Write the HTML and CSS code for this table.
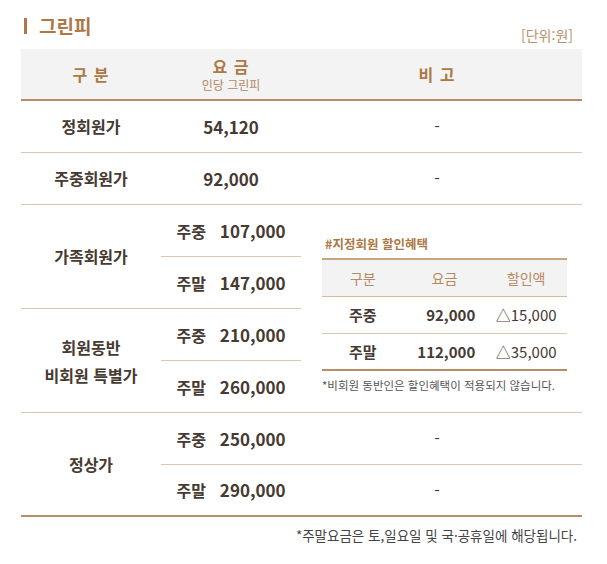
FILE: index.html
```html
<!DOCTYPE html>
<html lang="ko">
<head>
<meta charset="utf-8">
<title>그린피</title>
<link rel="stylesheet" href="styles.css">
</head>
<body>
<div class="page">
  <div class="head">
    <h2 class="title"><span class="bar"></span>그린피</h2>
    <span class="unit">[단위:원]</span>
  </div>
  <table class="fee">
    <colgroup>
      <col class="c1"><col class="c2"><col class="c3">
    </colgroup>
    <thead>
      <tr>
        <th>구 분</th>
        <th><span class="th-main">요 금</span><span class="th-sub">인당 그린피</span></th>
        <th class="th-note">비 고</th>
      </tr>
    </thead>
    <tbody>
      <tr>
        <td class="label">정회원가</td>
        <td class="price"><span class="num">54,120</span></td>
        <td class="note">-</td>
      </tr>
      <tr>
        <td class="label">주중회원가</td>
        <td class="price"><span class="num">92,000</span></td>
        <td class="note">-</td>
      </tr>
      <tr>
        <td class="label" rowspan="2">가족회원가</td>
        <td class="price"><span class="day">주중</span><span class="num">107,000</span></td>
        <td class="disc-cell" rowspan="4">
          <div class="disc">
            <p class="disc-title">#지정회원 할인혜택</p>
            <table class="disc-table">
              <thead>
                <tr><th>구분</th><th>요금</th><th>할인액</th></tr>
              </thead>
              <tbody>
                <tr><td class="d-day">주중</td><td class="d-price">92,000</td><td class="d-off">△15,000</td></tr>
                <tr><td class="d-day">주말</td><td class="d-price">112,000</td><td class="d-off">△35,000</td></tr>
              </tbody>
            </table>
            <p class="disc-note">*비회원 동반인은 할인혜택이 적용되지 않습니다.</p>
          </div>
        </td>
      </tr>
      <tr>
        <td class="price"><span class="day">주말</span><span class="num">147,000</span></td>
      </tr>
      <tr>
        <td class="label multi" rowspan="2">회원동반<br>비회원 특별가</td>
        <td class="price"><span class="day">주중</span><span class="num">210,000</span></td>
      </tr>
      <tr>
        <td class="price"><span class="day">주말</span><span class="num">260,000</span></td>
      </tr>
      <tr>
        <td class="label end" rowspan="2">정상가</td>
        <td class="price"><span class="day">주중</span><span class="num">250,000</span></td>
        <td class="note">-</td>
      </tr>
      <tr>
        <td class="price end"><span class="day">주말</span><span class="num">290,000</span></td>
        <td class="note end">-</td>
      </tr>
    </tbody>
  </table>
  <p class="foot">*주말요금은 토,일요일 및 국·공휴일에 해당됩니다.</p>
</div>
</body>
</html>
```
FILE: styles.css
```css
* { box-sizing: border-box; }
html, body { margin: 0; padding: 0; background: #fff; }
body {
  font-family: "Noto Sans CJK KR", "Noto Sans", sans-serif;
  color: #463a32;
}
.page {
  width: 561px;
  margin-left: 21px;
  padding-top: 12px;
}
.head {
  display: flex;
  justify-content: space-between;
  align-items: flex-end;
  height: 37px;
}
.title {
  margin: 0;
  display: flex;
  align-items: center;
  font-size: 19px;
  font-weight: 700;
  color: #ad7846;
  line-height: 28px;
  align-self: flex-start;
}
.bar {
  display: inline-block;
  width: 3px;
  height: 16px;
  background: #ad7846;
  margin-left: 3px;
  margin-right: 12px;
}
.unit {
  font-size: 14px;
  color: #b8916f;
  margin-right: 9px;
  margin-bottom: 4px;
  line-height: 20px;
}
.fee {
  width: 561px;
  border-collapse: collapse;
  table-layout: fixed;
}
.c1 { width: 140px; }
.c2 { width: 140px; }
.c3 { width: 281px; }
.fee > thead th {
  background: #f3f3f3;
  height: 51px;
  padding: 0;
  color: #ad7846;
  font-size: 16px;
  font-weight: 700;
  letter-spacing: 1px;
  border-bottom: 2px solid #b88c64;
  vertical-align: middle;
}
.fee > thead th.th-note { padding-right: 9px; }
.th-main { display: block; line-height: 19px; margin-top: 1px; }
.th-sub {
  display: block;
  font-size: 12px;
  font-weight: 400;
  letter-spacing: 0;
  color: #b08a64;
  line-height: 15px;
  margin-top: 1px;
}
.fee > tbody > tr > td {
  height: 52px;
  padding: 0;
  text-align: center;
  vertical-align: middle;
  border-bottom: 1px solid #dcc7b2;
  font-size: 16px;
  font-weight: 700;
}
.fee > tbody > tr > td.end { border-bottom: 2px solid #b88c64; }
.label { line-height: 28px; }
.fee > tbody > tr > td.multi { padding-top: 2px; }
.price .num { font-size: 17px; }
.price .day { margin-right: 14px; }
.fee > tbody > tr > td.note {
  font-weight: 400;
  color: #463a32;
  padding-right: 9px;
}
.fee > tbody > tr > td.disc-cell {
  padding: 12px 15px 0 21px;
  text-align: left;
}
.disc-title {
  margin: 0 0 4px 3px;
  font-size: 12.5px;
  font-weight: 700;
  color: #ad7846;
  line-height: 20px;
}
.disc-table {
  width: 245px;
  border-collapse: collapse;
  table-layout: fixed;
  border-top: 2px solid #c9a47f;
  border-bottom: 2px solid #b88c64;
}
.disc-table th {
  background: #f3f3f3;
  height: 37px;
  font-size: 14px;
  font-weight: 400;
  color: #b58a63;
  padding: 0;
  text-align: center;
  border-bottom: 1px solid #d5b999;
}
.disc-table td {
  height: 37px;
  padding: 0;
  font-size: 15px;
  border-bottom: 1px solid #dcc7b2;
  color: #463a32;
}
.disc-table tr:last-child td { border-bottom: none; }
.disc-table td.d-day { text-align: center; font-weight: 700; }
.disc-table td.d-price { text-align: right; font-weight: 700; padding-right: 10px; }
.disc-table td.d-off { text-align: center; font-weight: 400; }
.disc-note {
  margin: 5px 0 0 0;
  font-size: 11.5px;
  color: #555;
  line-height: 18px;
  font-weight: 400;
}
.foot {
  margin: 8px 5px 0 0;
  text-align: right;
  font-size: 13.5px;
  color: #444;
  line-height: 20px;
}
```
